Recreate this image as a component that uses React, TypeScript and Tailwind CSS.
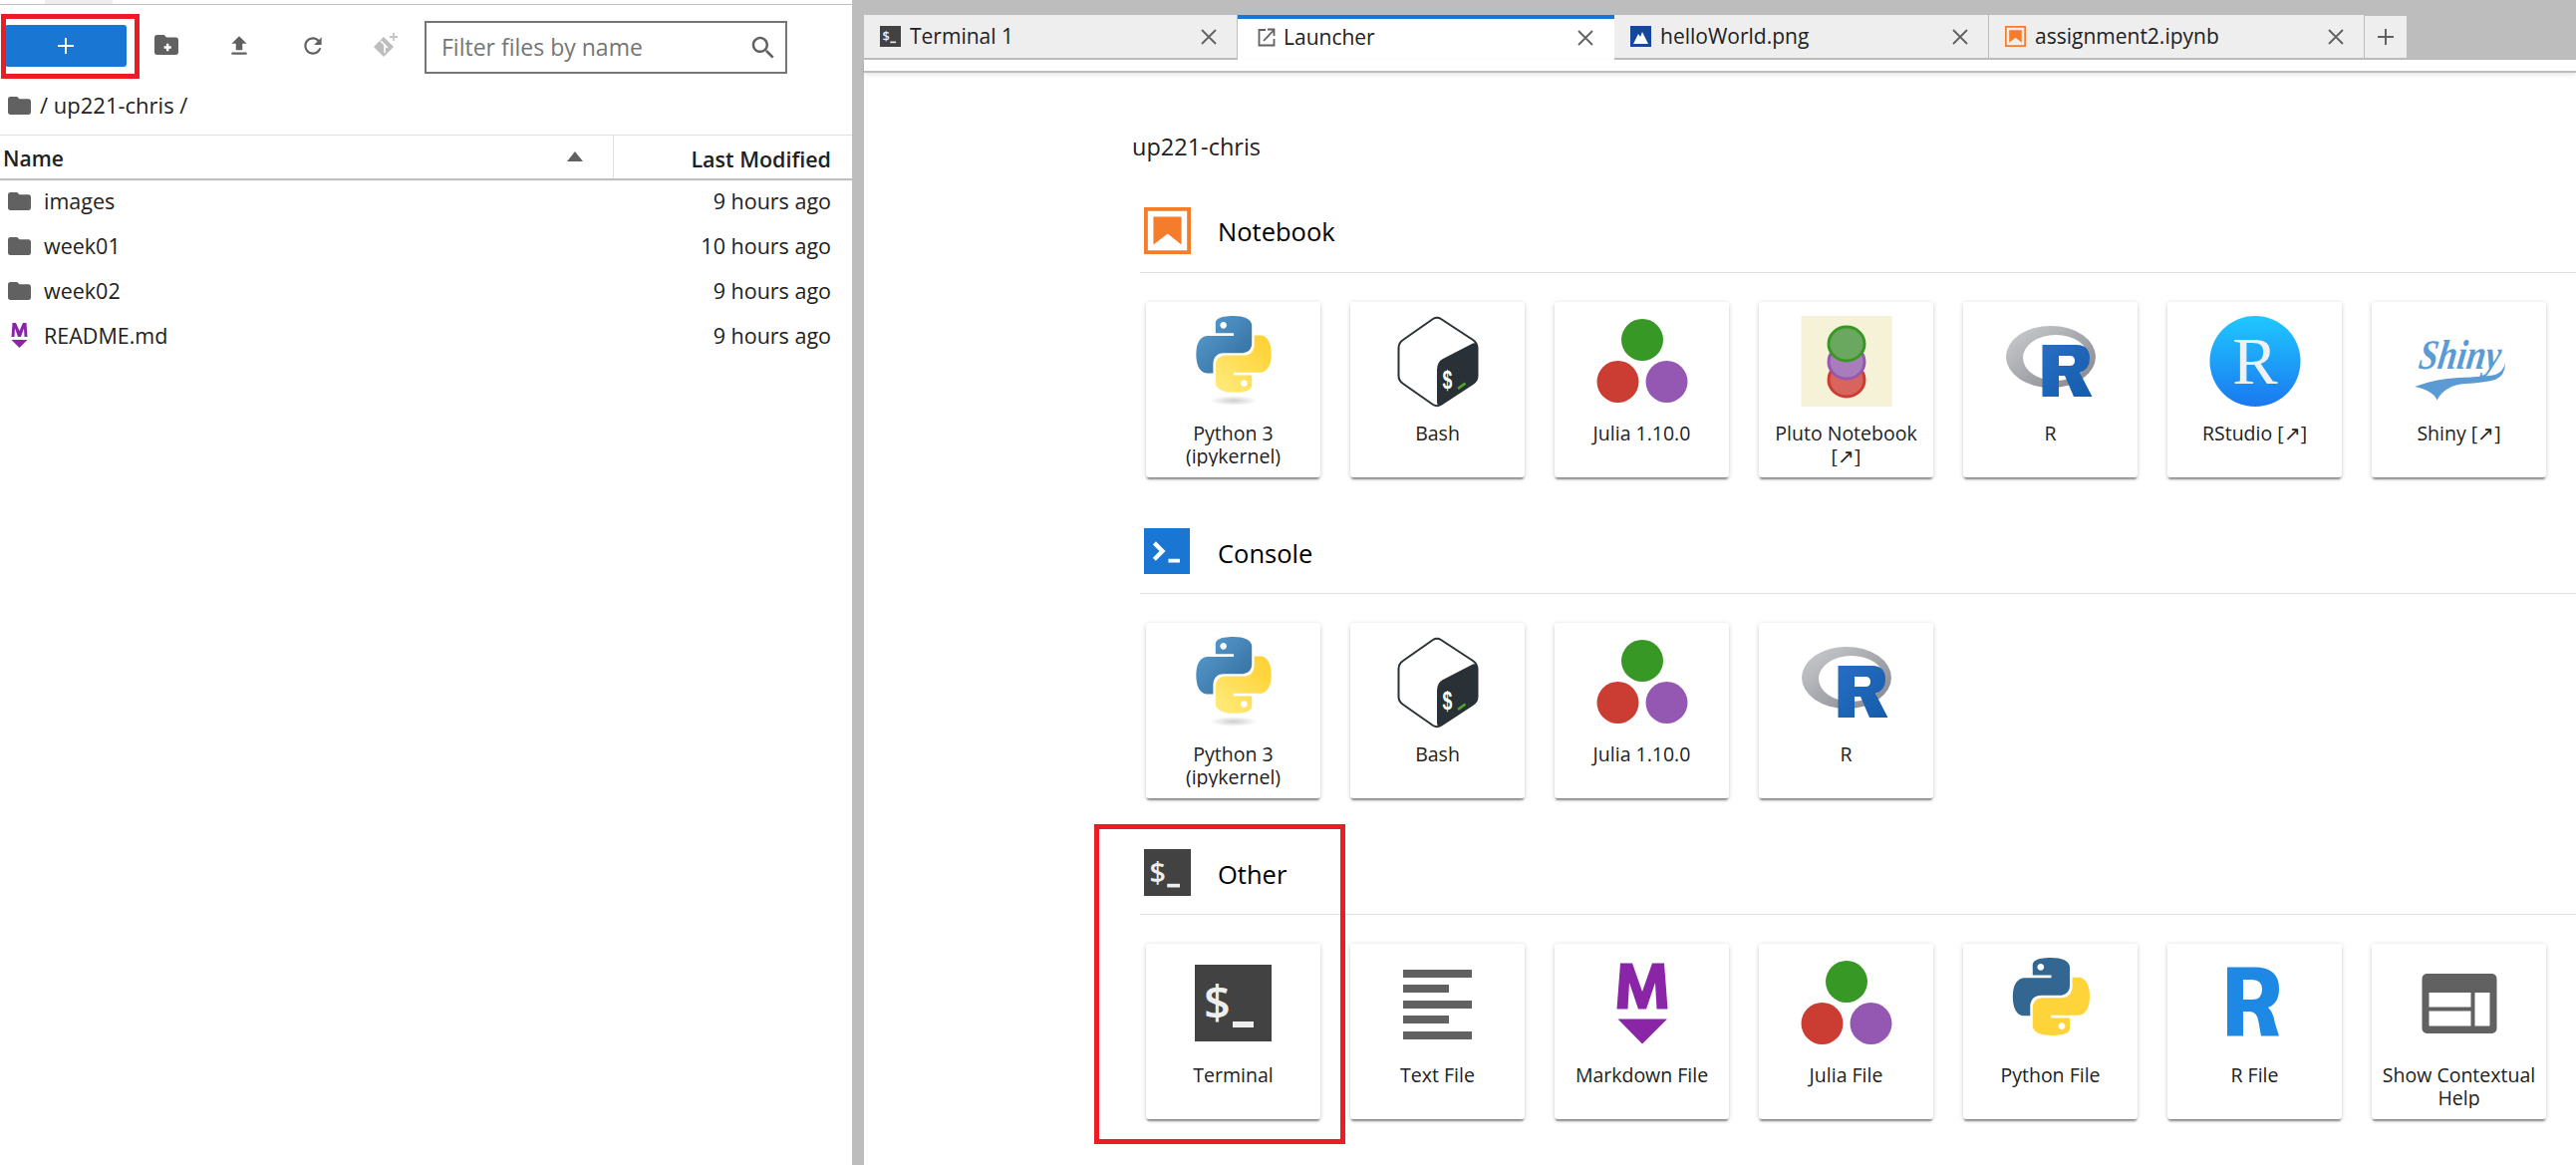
import React from 'react';

const pyBlue =
  'M14.25.18l.9.2.73.26.59.3.45.32.34.34.25.34.16.33.1.3.04.26.02.2-.01.13V8.5l-.05.63-.13.55-.21.46-.26.38-.3.31-.33.25-.35.19-.35.14-.33.1-.3.07-.26.04-.21.02H8.77l-.69.05-.59.14-.5.22-.41.27-.33.32-.27.35-.2.36-.15.37-.1.35-.07.32-.04.27-.02.21v3.06H3.17l-.21-.03-.28-.07-.32-.12-.35-.18-.36-.26-.36-.36-.35-.46-.32-.59-.28-.73-.21-.88-.14-1.05-.05-1.23.06-1.22.16-1.04.24-.87.32-.71.36-.57.4-.44.42-.33.42-.24.4-.16.36-.1.32-.05.24-.01h.16l.06.01h8.16v-.83H6.18l-.01-2.75-.02-.37.05-.34.11-.31.17-.28.25-.26.31-.23.38-.2.44-.18.51-.15.58-.12.64-.1.71-.06.77-.04.84-.02 1.27.05zm-6.3 1.98l-.23.33-.08.41.08.41.23.34.33.22.41.09.41-.09.33-.22.23-.34.08-.41-.08-.41-.23-.33-.33-.22-.41-.09-.41.09z';
const pyYellow =
  'M21.04 6.11l.28.06.32.12.35.18.36.27.36.35.35.47.32.59.28.73.21.88.14 1.04.05 1.23-.06 1.23-.16 1.04-.24.86-.32.71-.36.57-.4.45-.42.33-.42.24-.4.16-.36.09-.32.05-.24.02-.16-.01h-8.22v.82h5.84l.01 2.76.02.36-.05.34-.11.31-.17.29-.25.25-.31.24-.38.2-.44.17-.51.15-.58.13-.64.09-.71.07-.77.04-.84.01-1.27-.04-1.07-.14-.9-.2-.73-.25-.59-.3-.45-.33-.34-.34-.25-.34-.16-.33-.1-.3-.04-.25-.02-.2.01-.13v-5.34l.05-.64.13-.54.21-.46.26-.38.3-.32.33-.24.35-.2.35-.14.33-.1.3-.06.26-.04.21-.02.13-.01h5.84l.69-.05.59-.14.5-.21.41-.28.33-.32.27-.35.2-.36.15-.36.1-.35.07-.32.04-.28.02-.21V6.07h2.09l.14.01zm-6.47 14.25l-.23.33-.08.41.08.41.23.33.33.23.41.08.41-.08.33-.23.23-.33.08-.41-.08-.41-.23-.33-.33-.23-.41-.08-.41.08z';

function Python3Logo() {
  return (
    <svg width="92" height="92" viewBox="0 0 92 92">
      <defs>
        <linearGradient id="pyb" x1="0" y1="0" x2="1" y2="1">
          <stop offset="0" stopColor="#5a9fd4" />
          <stop offset="1" stopColor="#306998" />
        </linearGradient>
        <linearGradient id="pyy" x1="0.8" y1="0.2" x2="0.2" y2="0.9">
          <stop offset="0" stopColor="#ffd43b" />
          <stop offset="1" stopColor="#ffe873" />
        </linearGradient>
        <radialGradient id="pys">
          <stop offset="0" stopColor="#b8b8b8" stopOpacity="0.7" />
          <stop offset="1" stopColor="#b8b8b8" stopOpacity="0" />
        </radialGradient>
      </defs>
      <ellipse cx="46" cy="85" rx="24" ry="5" fill="url(#pys)" />
      <g transform="translate(8.5 0) scale(3.125 3.2)">
        <path d={pyBlue} fill="url(#pyb)" fillRule="evenodd" />
        <path d={pyYellow} fill="url(#pyy)" fillRule="evenodd" />
      </g>
    </svg>
  );
}

function PythonFileLogo() {
  return (
    <svg width="92" height="92" viewBox="0 0 92 92">
      <g transform="translate(8 0) scale(3.2 3.25)">
        <path d={pyBlue} fill="#336791" fillRule="evenodd" />
        <path d={pyYellow} fill="#ffd43b" fillRule="evenodd" />
      </g>
    </svg>
  );
}

function BashLogo() {
  return (
    <svg width="92" height="92" viewBox="0 0 92 92">
      <path
        d="M41 3 Q45 0.5 49 3 L81 24 Q85.5 27 85.5 32 V60 Q85.5 65 81 68 L49 89 Q45 91.5 41 89 L11 68 Q6.5 65 6.5 60 V32 Q6.5 27 11 24 Z"
        fill="#fff"
        stroke="#293137"
        strokeWidth="2"
      />
      <path
        d="M81 27.5 Q85.5 26 85.5 32 V60 Q85.5 65 81 68 L49 89 Q45 91 45 86 V54 Q45 46 51 43 Z"
        fill="#293137"
      />
      <text
        transform="translate(50.5 73) scale(0.68 1)"
        fill="#fff"
        fontSize="26"
        fontWeight="700"
        fontFamily="Liberation Sans, sans-serif"
      >
        $
      </text>
      <path d="M66 73 L73.5 67.5" stroke="#4da825" strokeWidth="2.6" />
    </svg>
  );
}

function JuliaLogo() {
  return (
    <svg width="92" height="92" viewBox="0 0 92 92">
      <circle cx="46" cy="24" r="21" fill="#389826" />
      <circle cx="21.5" cy="66" r="21" fill="#cb3c33" />
      <circle cx="70.5" cy="66" r="21" fill="#9558b2" />
    </svg>
  );
}

function PlutoLogo() {
  return (
    <svg width="92" height="92" viewBox="0 0 92 92">
      <rect x="0.5" width="91" height="91" fill="#f5f2d7" />
      <ellipse cx="46" cy="64" rx="18" ry="17" fill="#d9635d" stroke="#cb3c33" strokeWidth="3" />
      <ellipse cx="46" cy="46" rx="18" ry="17" fill="#a97dbb" stroke="#9558b2" strokeWidth="3" />
      <ellipse cx="46" cy="28" rx="18" ry="17" fill="#6aa75f" stroke="#389826" strokeWidth="3" />
    </svg>
  );
}

function RLogo() {
  return (
    <svg width="92" height="92" viewBox="0 0 92 92">
      <defs>
        <linearGradient id="rring" x1="0" y1="0" x2="1" y2="1">
          <stop offset="0" stopColor="#cbced0" />
          <stop offset="1" stopColor="#84838b" />
        </linearGradient>
        <linearGradient id="rblue" x1="0" y1="0" x2="1" y2="1">
          <stop offset="0" stopColor="#276dc3" />
          <stop offset="1" stopColor="#165caa" />
        </linearGradient>
      </defs>
      <path
        fillRule="evenodd"
        fill="url(#rring)"
        d="M1 41 A45 31 0 1 1 91 41 A45 31 0 1 1 1 41Z M18 42 A33 23 0 1 0 84 42 A33 23 0 1 0 18 42Z"
      />
      <path
        fillRule="evenodd"
        fill="url(#rblue)"
        d="M37.5 29 H72 Q85 29 85 43 Q85 53 75 57 L87.5 81 H69 L60 60 H54 V81 H37.5 Z M54 40 V50 H65 Q70 50 70 45 Q70 40 65 40 Z"
      />
    </svg>
  );
}

function RStudioLogo() {
  return (
    <svg width="92" height="92" viewBox="0 0 92 92">
      <defs>
        <linearGradient id="rs" x1="0" y1="0" x2="0" y2="1">
          <stop offset="0" stopColor="#20c8ff" />
          <stop offset="1" stopColor="#1a78f0" />
        </linearGradient>
      </defs>
      <circle cx="46" cy="45.5" r="45.5" fill="url(#rs)" />
      <text x="46" y="68" textAnchor="middle" fill="#eef2f5" fontSize="68" fontFamily="Liberation Serif, serif">
        R
      </text>
    </svg>
  );
}

function ShinyLogo() {
  return (
    <svg width="92" height="92" viewBox="0 0 92 92">
      <text
        transform="translate(4 53) skewX(-8)"
        fill="#5a9bd5"
        fontSize="42"
        fontStyle="italic"
        fontWeight="700"
        fontFamily="Liberation Serif, serif"
        textLength="82"
        lengthAdjust="spacingAndGlyphs"
      >
        Shiny
      </text>
      <path
        d="M1 71 Q22 63 45 62 Q72 61 82 59 Q90 56 92 47 Q92 60 82 64 Q70 67 52 68 Q32 69 23.5 84.5 Q20 75 1 71Z"
        fill="#5a9bd5"
      />
    </svg>
  );
}

function TerminalIcon({ size }: { size: number }) {
  return (
    <svg width={size} height={size} viewBox="0 0 77 77" className="shrink-0">
      <rect width="77" height="77" fill="#424242" />
      <text x="9" y="55" fill="#eeeeee" fontSize="47" fontWeight="600" fontFamily="Open Sans, sans-serif">
        $
      </text>
      <rect x="38" y="57" width="21" height="6" fill="#eeeeee" />
    </svg>
  );
}

function TerminalLogo() {
  return (
    <div className="w-[92px] h-[92px] flex items-center justify-center">
      <TerminalIcon size={77} />
    </div>
  );
}

function TextFileLogo() {
  return (
    <div className="w-[92px] h-[92px] flex flex-col items-start justify-center gap-[7.5px] pl-[11px] pt-[2px]">
      <div className="w-[69px] h-[8px] bg-[#616161]" />
      <div className="w-[46px] h-[8px] bg-[#616161]" />
      <div className="w-[69px] h-[8px] bg-[#616161]" />
      <div className="w-[46px] h-[8px] bg-[#616161]" />
      <div className="w-[69px] h-[8px] bg-[#616161]" />
    </div>
  );
}

function MarkdownLogo() {
  return (
    <svg width="92" height="92" viewBox="0 0 92 92">
      <path
        fill="#8a25a8"
        d="M20.5 51.5 L24 5.5 H36 L46 34 L56 5.5 H68 L71.5 51.5 H60.5 L59 25 L50 51.5 H42 L33 25 L31.5 51.5 Z"
      />
      <path fill="#8a25a8" d="M21.5 61.5 H71 L46 86.5 Z" />
    </svg>
  );
}

function RFileLogo() {
  return (
    <svg width="92" height="92" viewBox="0 0 92 92">
      <path
        fill="#1e88e5"
        fillRule="evenodd"
        d="M18 9.5 H45 Q70 9.5 70 31 Q70 46 59 50 Q64 54 66 66 L70 78.5 H52 L49 62 Q47 54 40 54 H34 V78.5 H18 Z M34 22 V42 H43 Q53 42 53 32 Q53 22 43 22 Z"
      />
    </svg>
  );
}

function HelpLogo() {
  return (
    <svg width="92" height="92" viewBox="0 0 92 92">
      <rect x="8.5" y="16" width="75" height="60" rx="5" fill="#616161" />
      <rect x="15.5" y="35" width="42" height="14.5" fill="#fff" />
      <rect x="15.5" y="53.5" width="42" height="15" fill="#fff" />
      <rect x="61.5" y="35" width="15" height="33.5" fill="#fff" />
    </svg>
  );
}

function FolderIcon({ className }: { className?: string }) {
  return (
    <svg width="23" height="18" viewBox="2 4 20 16" preserveAspectRatio="none" className={'shrink-0 ' + (className ?? '')}>
      <path
        fill="#616161"
        d="M10 4H4c-1.1 0-1.99.9-1.99 2L2 18c0 1.1.9 2 2 2h16c1.1 0 2-.9 2-2V8c0-1.1-.9-2-2-2h-8l-2-2z"
      />
    </svg>
  );
}

function MdFileIcon() {
  return (
    <svg width="23" height="26" viewBox="0 0 23 26" className="shrink-0 -mt-[4px]">
      <path
        fill="#8a25a8"
        d="M3.5 15 L4.5 1 H8 L11.5 9 L15 1 H18.5 L19.5 15 H16.5 L16 6.5 L13 15 H10 L7 6.5 L6.5 15 Z"
      />
      <path fill="#8a25a8" d="M3.5 18 H19.5 L11.5 26 Z" />
    </svg>
  );
}

function CloseX() {
  return (
    <svg width="18" height="16" viewBox="0 0 18 16" className="shrink-0">
      <path d="M2 1 L16 15 M16 1 L2 15" stroke="#616161" strokeWidth="1.8" fill="none" />
    </svg>
  );
}

function NotebookIcon({ size }: { size: number }) {
  return (
    <svg width={size} height={size} viewBox="1.8 1.8 18.4 18.4" className="shrink-0">
      <g fill="#f57c2a">
        <path d="M18.7 3.3v15.4H3.3V3.3h15.4m1.5-1.5H1.8v18.4h18.4V1.8z" />
        <path d="M16.5 16.5l-5.4-4.3-5.6 4.3v-11h11z" />
      </g>
    </svg>
  );
}

function ConsoleIcon() {
  return (
    <svg width="46" height="46" viewBox="20 20 160 160" className="shrink-0 mr-[1px]">
      <path fill="#1976d2" d="M20 20h160v160H20z" />
      <path
        fill="#fff"
        d="M105 127.3h40v12.8h-40zM51.1 77L74 99.9l-23.3 23.3 10.5 10.5 23.3-23.3L95 99.9 84.5 89.4 61.6 66.5z"
      />
    </svg>
  );
}

function ImageTabIcon() {
  return (
    <svg width="21" height="21" viewBox="0 0 21 21" className="shrink-0">
      <rect width="21" height="21" fill="#1546a0" />
      <path d="M3 18 L8 8 L10 11 L12 6 L18 18 Z" fill="#fff" />
    </svg>
  );
}

function LauncherTabIcon() {
  return (
    <svg width="18" height="19" viewBox="0 0 18 19" className="shrink-0" fill="none" stroke="#616161" strokeWidth="1.8">
      <path d="M8 2 H1.5 V17.5 H16.5 V11" />
      <path d="M6 13 L16 2.5 M10 1.5 H16.5 V8" />
    </svg>
  );
}

function TabItem({
  label,
  icon,
  active,
  width,
}: {
  label: string;
  icon: React.ReactNode;
  active?: boolean;
  width: string;
}) {
  return (
    <div
      className={
        width +
        (active
          ? ' h-[45px] bg-white border-t-[4px] border-[#1976d2] flex items-center pb-[4px] pl-[20px] pr-[20px] gap-[8px]'
          : ' h-[45px] bg-[#eeeeee] border-r border-b-2 border-[#bdbdbd] flex items-center pl-[16px] pr-[19px] gap-[9px]')
      }
    >
      {icon}
      <span className="flex-1 text-[21px] text-[#212121] truncate">{label}</span>
      <CloseX />
    </div>
  );
}

function Card({ label, logo }: { label: string; logo: React.ReactNode }) {
  return (
    <div className="w-[175px] h-[176px] shrink-0 rounded-[3px] bg-white flex flex-col items-center pt-[14px] shadow-[0_3px_2px_-1px_rgba(0,0,0,0.4),0_1px_5px_rgba(0,0,0,0.18)]">
      <div className="w-[92px] h-[92px] shrink-0">{logo}</div>
      {/* Long labels get clipped at the descenders, as in the real launcher */}
      <div className="mt-[12.5px] pt-[2px] h-[47px] w-full overflow-hidden px-[3px] text-center text-[19.5px] leading-[23px] text-[#212121]">
        {label}
      </div>
    </div>
  );
}

function Section({
  title,
  icon,
  cards,
}: {
  title: string;
  icon: React.ReactNode;
  cards: { label: string; logo: React.ReactNode }[];
}) {
  return (
    <section className="mb-[51.2px]">
      <div className="flex items-center gap-[27px] h-[66px] pb-[18px] pl-[4px] border-b border-[#e0e0e0]">
        {icon}
        <h2 className="pt-[3px] text-[25.5px] text-black">{title}</h2>
      </div>
      <div className="flex gap-[30px] mt-[29px] ml-[6px]">
        {cards.map((card) => (
          <Card key={card.label} label={card.label} logo={card.logo} />
        ))}
      </div>
    </section>
  );
}

const files = [
  { name: 'images', modified: '9 hours ago', md: false },
  { name: 'week01', modified: '10 hours ago', md: false },
  { name: 'week02', modified: '9 hours ago', md: false },
  { name: 'README.md', modified: '9 hours ago', md: true },
];

export default function App() {
  return (
    <div className="relative w-screen h-screen overflow-hidden flex bg-white font-['Open_Sans',sans-serif] text-[#212121]">
      {/* File browser */}
      <aside className="w-[855px] shrink-0 flex flex-col">
        <div className="h-[5px] border-b border-[#bdbdbd] pl-[45px]">
          <div className="w-[68px] h-[4px] bg-[#eeeeee]" />
        </div>
        <div className="h-[85px] flex items-start pl-[5px] pt-[20px]">
          <button className="w-[122px] h-[42px] rounded-[3px] bg-[#1976d2] flex items-center justify-center">
            <svg width="18" height="18" viewBox="0 0 18 18">
              <path d="M9 1 V17 M1 9 H17" stroke="#fff" strokeWidth="2" />
            </svg>
          </button>
          <div className="flex items-start w-[299px] pt-[10px]">
            <svg width="24" height="20" viewBox="2 4 20 16" preserveAspectRatio="none" className="ml-[28px]">
              <path
                fill="#616161"
                d="M10 4H4c-1.1 0-1.99.9-1.99 2L2 18c0 1.1.9 2 2 2h16c1.1 0 2-.9 2-2V8c0-1.1-.9-2-2-2h-8l-2-2zm2 7h2v2h2v2h-2v2h-2v-2h-2v-2h2v-2z"
                fillRule="evenodd"
              />
            </svg>
            <svg width="26" height="26" viewBox="0 0 24 24" className="ml-[48px] -mt-[2px]">
              <path fill="#616161" d="M9 16h6v-6h4l-7-7-7 7h4zm-4 2h14v2H5z" />
            </svg>
            <svg width="26" height="26" viewBox="0 0 24 24" className="ml-[48px] -mt-[2px]">
              <path
                fill="#616161"
                d="M17.65 6.35C16.2 4.9 14.21 4 12 4c-4.42 0-7.99 3.58-7.99 8s3.57 8 7.99 8c3.73 0 6.84-2.55 7.73-6h-2.08c-.82 2.33-3.04 4-5.65 4-3.31 0-6-2.69-6-6s2.69-6 6-6c1.66 0 3.14.69 4.22 1.78L13 11h7V4l-2.35 2.35z"
              />
            </svg>
            <svg width="26" height="26" viewBox="0 0 26 26" className="ml-[47px] -mt-[3px]">
              <path d="M11 5 L21 15 L11 25 L1 15 Z" fill="#bdbdbd" />
              <path d="M8 9 L12 13 V21 M12 13 L15 16" stroke="#fff" strokeWidth="1.6" fill="none" />
              <path d="M21 1 V9 M17 5 H25" stroke="#c4c4c4" strokeWidth="1.8" />
            </svg>
          </div>
          <div className="-mt-[4px] w-[364px] h-[53px] border-2 border-[#757575] flex items-center pl-[15px] pr-[7px]">
            <span className="flex-1 text-[23px] text-[#757575]">Filter files by name</span>
            <svg width="30" height="30" viewBox="0 0 24 24">
              <path
                fill="#616161"
                d="M15.5 14h-.79l-.28-.27C15.41 12.59 16 11.11 16 9.5 16 5.91 13.09 3 9.5 3S3 5.91 3 9.5 5.91 16 9.5 16c1.61 0 3.09-.59 4.23-1.57l.27.28v.79l5 4.99L20.49 19l-4.99-5zm-6 0C7.01 14 5 11.99 5 9.5S7.01 5 9.5 5 14 7.01 14 9.5 11.99 14 9.5 14z"
              />
            </svg>
          </div>
        </div>
        <div className="h-[45px] flex items-center gap-[9px] pl-[8px] pb-[14px]">
          <FolderIcon />
          <span className="text-[22px]">/ up221-chris /</span>
        </div>
        <div className="h-[44px] flex border-t border-[#e0e0e0] shadow-[0_2px_1px_rgba(0,0,0,0.25)]">
          <div className="w-[616px] flex items-center justify-between pl-[3px] pr-[30px] pt-[5px] border-r border-[#e0e0e0]">
            <span className="text-[21px] font-semibold">Name</span>
            <svg width="16" height="10" viewBox="0 0 16 10" className="-mt-[6px]">
              <path d="M8 0 L16 10 H0 Z" fill="#616161" />
            </svg>
          </div>
          <div className="flex-1 flex items-center justify-end pr-[21px] pt-[5px]">
            <span className="text-[21.5px] font-semibold">Last Modified</span>
          </div>
        </div>
        <div className="pt-[1px]">
          {files.map((file) => (
            <div key={file.name} className="h-[45px] flex items-center pl-[8px] pr-[21px]">
              {file.md ? <MdFileIcon /> : <FolderIcon className="-mt-[2px]" />}
              <span className="ml-[13px] flex-1 text-[21.5px]">{file.name}</span>
              <span className="text-[21.5px]">{file.modified}</span>
            </div>
          ))}
        </div>
      </aside>

      <div className="w-[12px] shrink-0 bg-[#bdbdbd]" />

      {/* Main area */}
      <main className="flex-1 min-w-0 flex flex-col">
        <div className="h-[60px] shrink-0 bg-[#bdbdbd] flex items-end pt-[15px]">
          <TabItem width="w-[375px]" label="Terminal 1" icon={<TerminalIcon size={21} />} />
          <TabItem width="w-[378px]" label="Launcher" active icon={<LauncherTabIcon />} />
          <TabItem width="w-[376px]" label="helloWorld.png" icon={<ImageTabIcon />} />
          <TabItem width="w-[377px]" label="assignment2.ipynb" icon={<NotebookIcon size={21} />} />
          <div className="w-[42px] h-[44px] self-start mt-[1px] bg-[#eeeeee] border-b-2 border-[#bdbdbd] flex items-center justify-center">
            <svg width="18" height="18" viewBox="0 0 18 18">
              <path d="M9 1 V17 M1 9 H17" stroke="#616161" strokeWidth="2" />
            </svg>
          </div>
        </div>
        <div className="h-[13px] shrink-0 bg-white border-b-2 border-[#bdbdbd] shadow-[0_2px_4px_rgba(0,0,0,0.1)]" />
        <div className="pl-[277px]">
          <div className="h-[30px] mt-[59px] -ml-[8px] text-[23.5px] leading-[30px] text-[#212121]">up221-chris</div>
          <div className="mt-[45.5px]">
            <Section
              title="Notebook"
              icon={<NotebookIcon size={47} />}
              cards={[
                { label: 'Python 3 (ipykernel)', logo: <Python3Logo /> },
                { label: 'Bash', logo: <BashLogo /> },
                { label: 'Julia 1.10.0', logo: <JuliaLogo /> },
                { label: 'Pluto Notebook [↗]', logo: <PlutoLogo /> },
                { label: 'R', logo: <RLogo /> },
                { label: 'RStudio [↗]', logo: <RStudioLogo /> },
                { label: 'Shiny [↗]', logo: <ShinyLogo /> },
              ]}
            />
            <Section
              title="Console"
              icon={<ConsoleIcon />}
              cards={[
                { label: 'Python 3 (ipykernel)', logo: <Python3Logo /> },
                { label: 'Bash', logo: <BashLogo /> },
                { label: 'Julia 1.10.0', logo: <JuliaLogo /> },
                { label: 'R', logo: <RLogo /> },
              ]}
            />
            <Section
              title="Other"
              icon={<TerminalIcon size={47} />}
              cards={[
                { label: 'Terminal', logo: <TerminalLogo /> },
                { label: 'Text File', logo: <TextFileLogo /> },
                { label: 'Markdown File', logo: <MarkdownLogo /> },
                { label: 'Julia File', logo: <JuliaLogo /> },
                { label: 'Python File', logo: <PythonFileLogo /> },
                { label: 'R File', logo: <RFileLogo /> },
                { label: 'Show Contextual Help', logo: <HelpLogo /> },
              ]}
            />
          </div>
        </div>
      </main>

      {/* Red annotation boxes */}
      <div className="absolute left-[1px] top-[14px] w-[139px] h-[65px] border-[5px] border-[#ed1c24]" />
      <div className="absolute left-[1098px] top-[827px] w-[252px] h-[321px] border-[5px] border-[#ed1c24]" />
    </div>
  );
}
